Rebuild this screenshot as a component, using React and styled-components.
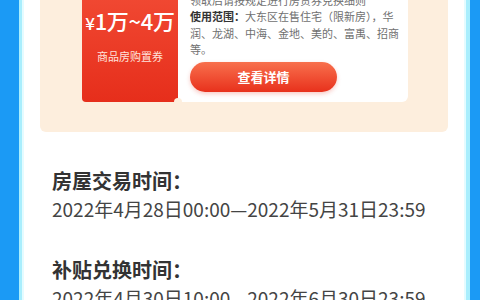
import React from 'react';
import styled, { createGlobalStyle } from 'styled-components';

const GlobalStyle = createGlobalStyle`
  html, body {
    margin: 0;
    padding: 0;
    background: #1b9af5;
    font-family: "Noto Sans CJK SC", "Noto Sans", sans-serif;
  }
`;

const Page = styled.div`
  height: 300px;
  overflow: hidden;
  display: flex;
  padding: 0 10px 0 19px;
  background: #1b9af5;
`;

const Sheet = styled.div`
  flex: 1;
  background: #ffffff;
  border-left: 3px solid #a9eefd;
  border-right: 4px solid #a9eefd;
  box-shadow: inset 2px 0 0 #e4fbff, inset -2px 0 0 #e4fbff;
  padding: 0 18px;
`;

const Scrolled = styled.div`
  margin-top: -77px;
`;

const CouponPanel = styled.div`
  background: #fdeedd;
  border-radius: 6px;
  padding: 16px 40px 30px 42px;
  display: flex;
`;

const Coupon = styled.div`
  position: relative;
  width: 96px;
  flex-shrink: 0;
  border-radius: 6px 0 4px 4px;
  background: linear-gradient(180deg, #f6573f 0%, #e62e1b 100%);
  display: flex;
  flex-direction: column;
  align-items: center;
  padding-top: 66px;
  color: #ffffff;
`;

const Amount = styled.div`
  font-size: 22px;
  line-height: 30px;
  font-weight: 500;
  letter-spacing: -0.3px;

  span {
    font-size: 17px;
  }
`;

const CouponName = styled.div`
  margin-top: 10px;
  font-size: 11px;
  line-height: 16px;
  color: #ffe3dc;
`;

const Notch = styled.div`
  position: absolute;
  width: 8px;
  height: 8px;
  border-radius: 50%;
  background: #fdeedd;
  right: -4px;
  bottom: -4px;
`;

const CouponBody = styled.div`
  flex: 1;
  background: #ffffff;
  border-radius: 0 6px 6px 0;
  padding: 12px 7px 10px 12px;
  font-size: 11px;
  line-height: 16.5px;
  color: #707070;
`;

const CouponTitle = styled.div`
  font-size: 14px;
  line-height: 20px;
  font-weight: 700;
  color: #333333;
  margin-bottom: 4px;
`;

const Label = styled.b`
  color: #333333;
  font-weight: 700;
`;

const DetailButton = styled.button`
  display: block;
  margin-top: 4px;
  width: 147px;
  height: 30px;
  border: none;
  border-radius: 15px;
  background: linear-gradient(180deg, #f8704d 0%, #e8311c 100%);
  box-shadow: 0 2px 4px rgba(232, 49, 28, 0.25);
  color: #ffffff;
  font-family: inherit;
  font-size: 13px;
  font-weight: 700;
  cursor: pointer;
`;

const InfoBlock = styled.div`
  padding: 0 12px;
  margin-top: ${props => props.gap}px;
`;

const InfoTitle = styled.div`
  font-size: 20px;
  line-height: 28px;
  font-weight: 700;
  color: #333333;
`;

const InfoText = styled.div`
  font-size: 19px;
  line-height: 28px;
  color: #444444;
  white-space: nowrap;
`;

const periods = [
  { title: '房屋交易时间：', text: '2022年4月28日00:00—2022年5月31日23:59', gap: 35 },
  { title: '补贴兑换时间：', text: '2022年4月30日10:00—2022年6月30日23:59', gap: 33 },
];

const App = () => (
  <>
    <GlobalStyle />
    <Page>
      <Sheet>
        <Scrolled>
          <CouponPanel>
            <Coupon>
              <Amount><span>¥</span>1万~4万</Amount>
              <CouponName>商品房购置券</CouponName>
              <Notch />
            </Coupon>
            <CouponBody>
              <CouponTitle>沈阳购房补贴券</CouponTitle>
              <div>有效期：以活动公告为准</div>
              <div>领取后请按规定进行房贷券兑换细则</div>
              <div>
                <Label>使用范围：</Label>大东区在售住宅（限新房），华润、龙湖、中海、金地、美的、富禹、招商等。
              </div>
              <DetailButton>查看详情</DetailButton>
            </CouponBody>
          </CouponPanel>
          {periods.map(p => (
            <InfoBlock key={p.title} gap={p.gap}>
              <InfoTitle>{p.title}</InfoTitle>
              <InfoText>{p.text}</InfoText>
            </InfoBlock>
          ))}
        </Scrolled>
      </Sheet>
    </Page>
  </>
);

export default App;
